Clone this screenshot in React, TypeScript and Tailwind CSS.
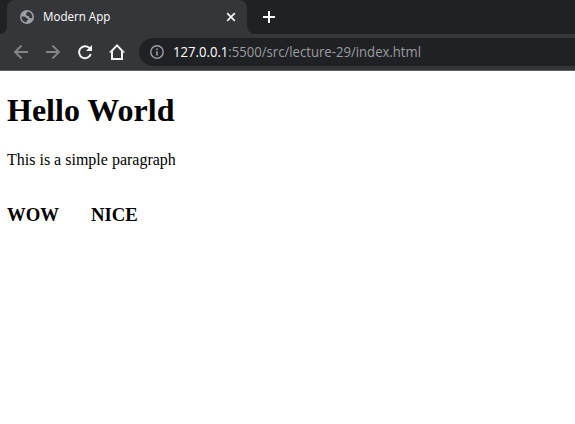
import React from "react";

function TabStrip() {
  return (
    <div className="flex h-[34px] items-end bg-[#202124]">
      <div className="h-2 w-[7px] overflow-hidden bg-[#35363a]">
        <div className="h-2 w-[7px] rounded-br-lg bg-[#202124]" />
      </div>
      <div className="flex h-[34px] w-[240px] items-center rounded-t-lg bg-[#35363a] pl-3">
        <svg className="size-4 shrink-0" viewBox="0 0 16 16">
          <circle cx="8" cy="8" r="7" fill="#9aa0a6" />
          <path
            d="M9 2.600L7.500 4 7 5.800l1.200 1.100 1.600.2.600 1.700 1.400.5 1.500-.3A5.500 5.500 0 0 0 9 2.600zM2.500 7.600h3l1.600 1.200 1.600.7.300 1.200-1.300 1-.3 1.700A5.500 5.500 0 0 1 2.500 7.600z"
            fill="#35363a"
          />
        </svg>
        <span className="ml-2 w-[176px] whitespace-nowrap font-['Open_Sans',sans-serif] text-[12px] leading-4 text-white">
          <span className="inline-block origin-left scale-x-[0.965]">Modern App</span>
        </span>
        <svg className="ml-1 size-4 shrink-0" viewBox="0 0 16 16" fill="none" stroke="#f1f3f4" strokeWidth="1.700">
          <path d="M4.200 4.200l7.600 7.600M11.800 4.200l-7.600 7.600" />
        </svg>
      </div>
      <div className="h-2 w-2 bg-[#35363a]">
        <div className="size-2 rounded-bl-lg bg-[#202124]" />
      </div>
      <div className="flex h-[34px] items-center pl-[6px]">
        <svg className="size-4" viewBox="0 0 16 16" fill="none" stroke="#fff" strokeWidth="2">
          <path d="M8 2v12M2 8h12" />
        </svg>
      </div>
    </div>
  );
}

function Toolbar() {
  return (
    <div className="flex h-9 items-center bg-[#35363a] pl-[11px]">
      <svg className="size-5 shrink-0" viewBox="0 0 20 20" fill="none" stroke="#85868a" strokeWidth="1.8">
        <path d="M17 10H4.500M10.500 3.500L4 10l6.500 6.500" />
      </svg>
      <svg className="ml-3 size-5 shrink-0" viewBox="0 0 20 20" fill="none" stroke="#85868a" strokeWidth="1.8">
        <path d="M3 10h12.500M9.500 3.500L16 10l-6.500 6.500" />
      </svg>
      <svg className="ml-3 size-5 shrink-0" viewBox="0 0 20 20" fill="none" stroke="#f1f3f4" strokeWidth="2">
        <path d="M15.800 12A6 6 0 1 1 14.200 5.800L15.500 7" />
        <path d="M17 3v6h-6z" fill="#f1f3f4" stroke="none" />
      </svg>
      <svg className="ml-3 size-5 shrink-0" viewBox="0 0 20 20" fill="#f1f3f4" fillRule="evenodd">
        <path d="M10 2L18.200 10.500H16V18H4v-7.500H1.800zM10 4.800L6 9v7h8V9z" />
      </svg>
      <div className="ml-3 flex h-7 flex-1 items-center rounded-l-full bg-[#202124] pl-[10px]">
        <svg className="size-4 shrink-0" viewBox="0 0 16 16">
          <circle cx="8" cy="8" r="6.200" fill="none" stroke="#9aa0a6" strokeWidth="1.400" />
          <path d="M7.200 4.500h1.600v1.600H7.200zM7.200 7.200h1.600v4.300H7.200z" fill="#9aa0a6" />
        </svg>
        <span className="ml-2 whitespace-nowrap font-['Open_Sans',sans-serif] text-[14px] leading-5 text-[#9a9da0]">
          <span className="inline-block origin-left scale-x-[0.937]">
            <span className="text-white">127.0.0.1</span>:5500/src/lecture-29/index.html
          </span>
        </span>
      </div>
    </div>
  );
}

export default function App() {
  return (
    <div className="flex h-[424px] w-[575px] flex-col overflow-hidden bg-white">
      <TabStrip />
      <Toolbar />
      <div className="h-px bg-[#5f5e62]" />
      <main className="pl-[7px] font-['Liberation_Serif',serif] text-black">
        <h1 className="mt-[21px] text-[32px] leading-[37px] font-bold">Hello World</h1>
        <p className="mt-[22px] text-[16px] leading-[18px]">This is a simple paragraph</p>
        <div className="mt-[35px] flex gap-8 text-[18.72px] leading-[21px] font-bold">
          <h3>WOW</h3>
          <h3>NICE</h3>
        </div>
      </main>
    </div>
  );
}
